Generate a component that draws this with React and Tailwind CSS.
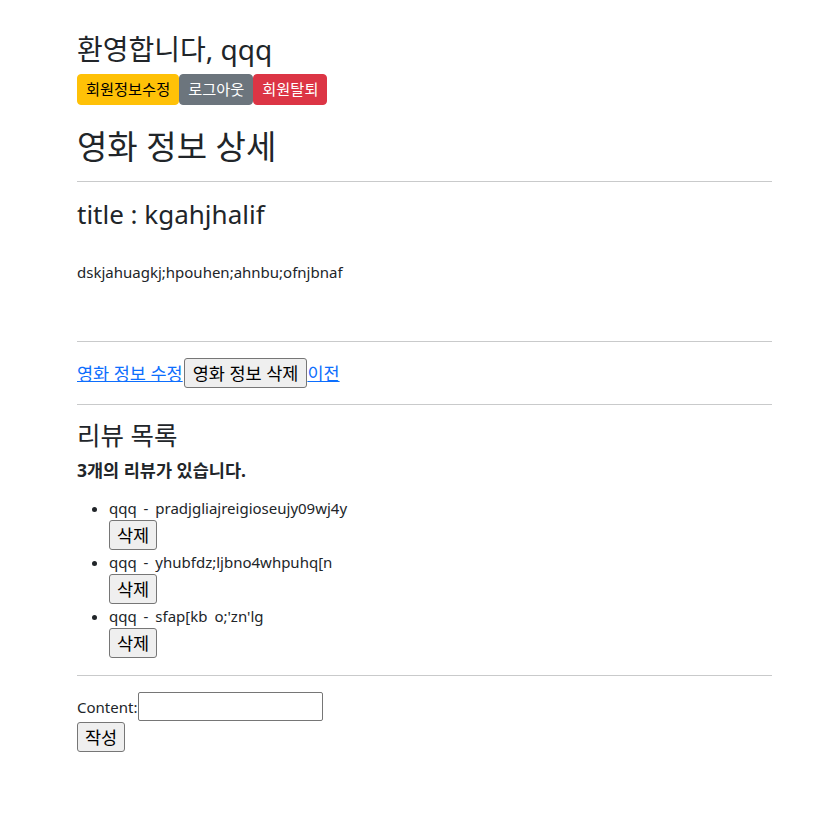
import React from 'react';

const reviews = [
  { user: 'qqq', content: 'pradjgliajreigioseujy09wj4y' },
  { user: 'qqq', content: 'yhubfdz;ljbno4whpuhq[n' },
  { user: 'qqq', content: "sfap[kb o;'zn'lg" },
];

// Hangul in Noto Sans CJK KR runs a bit narrower than the original, so Korean text is set ~9% larger
function NativeButton({ children, className = 'px-[7px]' }) {
  return (
    <button
      type="button"
      className={`h-[30px] text-[17.5px] leading-6 text-black bg-[#efefef] border border-[#767676] rounded-[3px] ${className}`}
    >
      {children}
    </button>
  );
}

export default function App() {
  return (
    <div className="min-h-screen bg-white text-[#212529] text-[15px] leading-6 [font-family:'Noto_Sans','Noto_Sans_CJK_KR',sans-serif]">
      <div className="ml-[77px] w-[695px] pt-[32px] pb-[40px]">
        {/* header */}
        <h2 className="text-[28px] leading-[34px] font-normal">환영합니다, qqq</h2>
        <div className="mt-[8px] flex">
          <button type="button" className="h-[31px] px-2 text-[15.25px] leading-[21px] bg-[#ffc107] text-black border border-[#ffc107] rounded-[4px]">
            회원정보수정
          </button>
          <button type="button" className="h-[31px] px-2 text-[15.25px] leading-[21px] bg-[#6c757d] text-white border border-[#6c757d] rounded-[4px]">
            로그아웃
          </button>
          <button type="button" className="h-[31px] px-2 text-[15.25px] leading-[21px] bg-[#dc3545] text-white border border-[#dc3545] rounded-[4px]">
            회원탈퇴
          </button>
        </div>

        <h1 className="mt-[21px] text-[33px] leading-[41px] font-normal">영화 정보 상세</h1>
        <hr className="mt-[14px] border-t border-[#c9cacb]" />

        {/* movie */}
        <h3 className="mt-[17px] text-[26px] leading-[31px] font-normal">title : kgahjhalif</h3>
        <p className="mt-[30px]">dskjahuagkj;hpouhen;ahnbu;ofnjbnaf</p>
        <hr className="mt-[57px] border-t border-[#c9cacb]" />

        <div className="mt-[16px] flex items-center h-[30px] text-[17.5px]">
          <a href="#" className="mr-px text-[#0d6efd] underline">영화 정보 수정</a>
          <NativeButton className="px-[8px]">영화 정보 삭제</NativeButton>
          <a href="#" className="text-[#0d6efd] underline">이전</a>
        </div>
        <hr className="mt-[16px] border-t border-[#c9cacb]" />

        {/* reviews */}
        <h4 className="mt-[16px] text-[25.5px] leading-[28px] font-normal">리뷰 목록</h4>
        <p className="mt-[9px] text-[17.5px] font-bold">3개의 리뷰가 있습니다.</p>
        <ul className="mt-[14px] list-disc pl-8">
          {reviews.map((r, i) => (
            <li key={i}>
              <span className="[word-spacing:3px]">{r.user} - {r.content}</span>
              <div>
                <NativeButton>삭제</NativeButton>
              </div>
            </li>
          ))}
        </ul>
        <hr className="mt-[17px] border-t border-[#c9cacb]" />

        {/* form */}
        <div className="mt-[16px] flex items-center h-[29px]">
          <label>Content:</label>
          <input type="text" className="ml-px w-[185px] h-[29px] border border-[#767676] rounded-[2px] px-[2px]" />
        </div>
        <div className="mt-[1px]">
          <NativeButton>작성</NativeButton>
        </div>
      </div>
    </div>
  );
}
